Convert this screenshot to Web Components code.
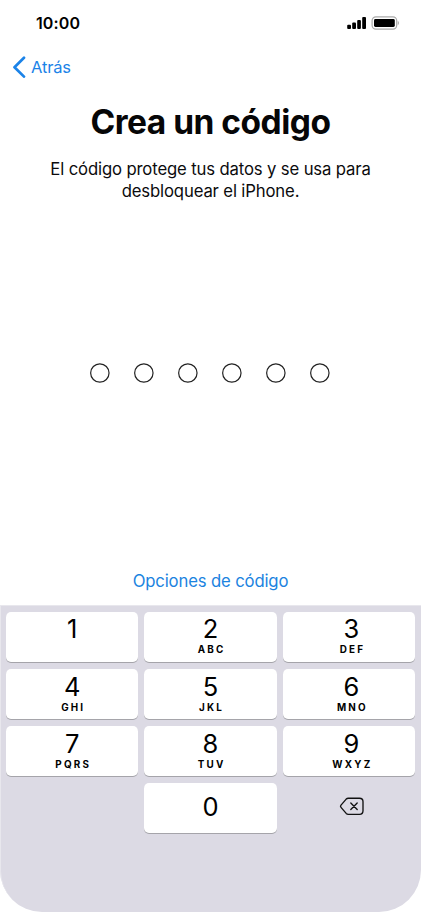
<!DOCTYPE html>
<html lang="es">
<head>
<meta charset="utf-8">
<title>Crea un código</title>
<style>
html, body { margin: 0; height: 100%; background: #fff; }
body { font-family: Inter, "Liberation Sans", sans-serif; color: #0b0b0d; overflow: hidden; }
</style>
</head>
<body>
<passcode-screen></passcode-screen>
<script>
function define(name, html, setup) {
  const template = document.createElement('template');
  template.innerHTML = html;
  customElements.define(name, class extends HTMLElement {
    constructor() {
      super();
      this.attachShadow({ mode: 'open' }).append(template.content.cloneNode(true));
    }
    connectedCallback() { if (setup) setup(this, this.shadowRoot); }
  });
}

define('status-bar', `
<style>
:host { display: flex; height: 46px; box-sizing: border-box; padding: 0 22px 0 36px; justify-content: space-between; align-items: center; color: #000; }
time { font-size: 16px; font-weight: 600; line-height: 20px; letter-spacing: .1px; white-space: nowrap; }
svg { display: block; }
</style>
<time>10:00</time>
<svg width="53" height="16" viewBox="0 0 53 16">
  <g fill="#000">
    <rect x="1.200" y="9.700" width="3.800" height="4.300" rx="1"/>
    <rect x="6.200" y="7.500" width="3.800" height="6.500" rx="1"/>
    <rect x="11.200" y="5" width="3.700" height="9" rx="1"/>
    <rect x="16.200" y="2" width="3.800" height="12" rx="1"/>
    <rect x="28" y="4" width="20.800" height="8" rx="1.400"/>
  </g>
  <rect x="26.100" y="1.800" width="24.600" height="12.300" rx="3.800" fill="none" stroke="#aaa" stroke-width="1.200"/>
  <path d="M51.800 6c1.300.4 1.300 3.500 0 4z" fill="#999"/>
</svg>`);

define('back-link', `
<style>
:host { display: flex; height: 42px; padding-left: 12px; align-items: center; gap: 5px; color: #1b83e8; font-size: 16.5px; line-height: 20px; letter-spacing: -.15px; }
svg { display: block; }
</style>
<svg width="14" height="22" viewBox="0 0 14 22" fill="none" stroke="currentColor" stroke-width="2.7" stroke-linecap="round" stroke-linejoin="round"><path d="M12 1.800L2.500 11.200L12 20.600"/></svg>
<span><slot></slot></span>`);

define('screen-heading', `
<style>
:host { display: block; text-align: center; white-space: nowrap; }
h1 { margin: 13px 0 0; font-size: 33.500px; font-weight: 700; line-height: 42px; letter-spacing: -.5px; color: #060607; }
p { margin: 15px 0 0; font-size: 16.700px; line-height: 22px; letter-spacing: -.14px; }
</style>
<h1><slot name="title"></slot></h1>
<p><slot></slot></p>`);

define('passcode-dots', `
<style>
:host { display: flex; justify-content: center; gap: 24.200px; padding-right: 1px; }
svg { display: block; width: 19.700px; height: 20px; overflow: visible; }
</style>`, (host, root) => {
  for (let n = 0; n < Number(host.getAttribute('length')); n++) {
    root.append(document.createRange().createContextualFragment(
      '<svg viewBox="0 0 19.700 20"><circle cx="9.850" cy="10" r="9.200" fill="none" stroke="#222" stroke-width="1.200"/></svg>'));
  }
});

define('text-link', `
<style>
:host { display: block; text-align: center; color: #1b83e0; font-size: 16.700px; line-height: 22px; letter-spacing: -.15px; white-space: nowrap; }
</style>
<slot></slot>`);

define('key-button', `
<style>
:host { display: flex; flex-direction: column; align-items: center; box-sizing: border-box; height: 49.500px; padding-top: 3px; border-radius: 5px; background: #fff; box-shadow: 0 1px 0 #a5a4aa; color: #000; }
:host([raised]) { padding-top: 2px; }
:host([centered]) { padding-top: 9px; }
:host([shifted]) { padding-left: 5px; }
.digit { font-size: 25.500px; font-weight: 400; line-height: 30px; }
.letters { font-size: 9.900px; font-weight: 700; line-height: 12px; letter-spacing: 2.200px; margin: -1px -2.200px 0 0; white-space: nowrap; }
</style>
<span class="digit"><slot></slot></span>
<span class="letters"><slot name="letters"></slot></span>`);

define('delete-key', `
<style>
:host { display: flex; justify-content: center; height: 49.500px; align-items: center; color: #111; }
svg { display: block; margin: -4px 0 0 6px; }
</style>
<svg width="26" height="20" viewBox="0 0 26 20" fill="none" stroke="currentColor" stroke-width="1.350" stroke-linecap="round" stroke-linejoin="round">
  <path d="M9.300 2.200H20.500Q24 2.200 24 5.700V14.800Q24 18.300 20.500 18.300H9.300Q8.100 18.300 7.200 17.400L2 11.400Q1 10.250 2 9.100L7.200 3.100Q8.100 2.200 9.300 2.200Z"/>
  <path d="M11.800 7L18.200 13.500M18.200 7L11.800 13.500"/>
</svg>`);

define('number-pad', `
<style>
:host { display: block; box-sizing: border-box; height: 307px; padding: 7px 6px 0; background: #dcdae4; border-radius: 0 0 42px 42px; box-shadow: inset 1px 1px 0 #e8e7ed; }
.keys { display: grid; grid-template-columns: repeat(3, 1fr); column-gap: 6px; row-gap: 7.500px; }
</style>
<div class="keys"></div>`, (host, root) => {
  const letters = ['', 'ABC', 'DEF', 'GHI', 'JKL', 'MNO', 'PQRS', 'TUV', 'WXYZ'];
  root.querySelector('.keys').innerHTML =
    letters.map((t, n) => `<key-button${n < 3 ? ' raised' : ''}${n % 3 === 2 ? ' shifted' : ''}>${n + 1}${t ? `<span slot="letters">${t}</span>` : ''}</key-button>`).join('') +
    '<span></span><key-button centered>0</key-button><delete-key></delete-key>';
});

define('passcode-screen', `
<style>
:host { display: flex; flex-direction: column; width: 421px; height: 912px; background: #fff; }
passcode-dots { margin-top: 161px; }
text-link { margin-top: auto; margin-bottom: 13.500px; }
</style>
<status-bar></status-bar>
<back-link>Atrás</back-link>
<screen-heading><span slot="title">Crea un código</span>El código protege tus datos y se usa para<br>desbloquear el iPhone.</screen-heading>
<passcode-dots length="6"></passcode-dots>
<text-link>Opciones de código</text-link>
<number-pad></number-pad>`);
</script>
</body>
</html>
